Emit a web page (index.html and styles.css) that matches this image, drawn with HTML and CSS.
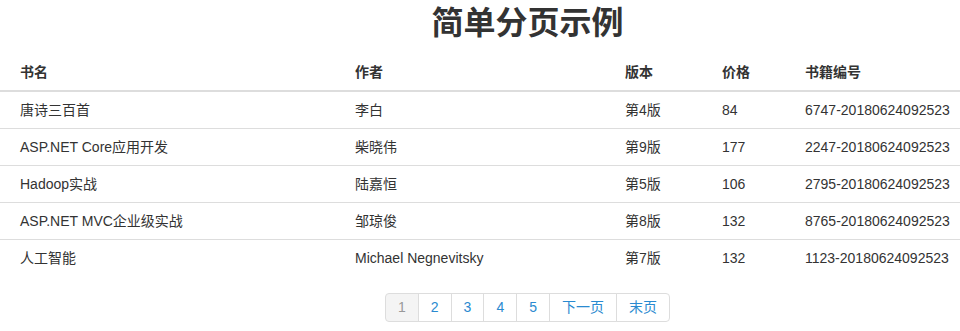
FILE: index.html
```html
<!DOCTYPE html>
<html lang="zh-CN">
<head>
<meta charset="utf-8">
<title>简单分页示例</title>
<link rel="stylesheet" href="styles.css">
</head>
<body>
<div class="center-block">
  <h1 class="title">简单分页示例</h1>
</div>
<table class="book-table">
  <colgroup>
    <col class="c-name">
    <col class="c-author">
    <col class="c-edition">
    <col class="c-price">
    <col class="c-code">
  </colgroup>
  <thead>
    <tr><th>书名</th><th>作者</th><th>版本</th><th>价格</th><th>书籍编号</th></tr>
  </thead>
  <tbody>
    <tr><td>唐诗三百首</td><td>李白</td><td>第4版</td><td>84</td><td>6747-20180624092523</td></tr>
    <tr><td>ASP.NET Core应用开发</td><td>柴晓伟</td><td>第9版</td><td>177</td><td>2247-20180624092523</td></tr>
    <tr><td>Hadoop实战</td><td>陆嘉恒</td><td>第5版</td><td>106</td><td>2795-20180624092523</td></tr>
    <tr><td>ASP.NET MVC企业级实战</td><td>邹琼俊</td><td>第8版</td><td>132</td><td>8765-20180624092523</td></tr>
    <tr><td>人工智能</td><td>Michael Negnevitsky</td><td>第7版</td><td>132</td><td>1123-20180624092523</td></tr>
  </tbody>
</table>
<div class="center-block">
  <ul class="pager">
    <li class="active"><span>1</span></li>
    <li><a href="#">2</a></li>
    <li><a href="#">3</a></li>
    <li><a href="#">4</a></li>
    <li><a href="#">5</a></li>
    <li><a href="#">下一页</a></li>
    <li><a href="#">末页</a></li>
  </ul>
</div>
</body>
</html>
```
FILE: styles.css
```css
html, body {
  margin: 0;
  padding: 0;
  background: #fff;
}
body {
  font-family: "Liberation Sans", "Noto Sans CJK SC", sans-serif;
  font-size: 14px;
  line-height: 20px;
  color: #333;
}
.center-block {
  padding-left: 95px;
  text-align: center;
}
.title {
  margin: 6px 0 13px;
  font-size: 32px;
  line-height: 35px;
  font-weight: bold;
  color: #333;
}
.book-table {
  width: 960px;
  border-collapse: collapse;
  border-spacing: 0;
  table-layout: fixed;
}
.c-name { width: 347px; }
.c-author { width: 270px; }
.c-edition { width: 97px; }
.c-price { width: 83px; }
.c-code { width: 163px; }
.book-table th,
.book-table td {
  padding: 8px;
  text-align: left;
  vertical-align: top;
  white-space: nowrap;
}
.book-table th {
  font-weight: bold;
  border-bottom: 2px solid #ddd;
}
.book-table td {
  border-top: 1px solid #ddd;
}
.book-table th:first-child,
.book-table td:first-child {
  padding-left: 20px;
}
.book-table th:last-child,
.book-table td:last-child {
  padding-right: 4px;
}
.pager {
  display: inline-flex;
  margin: 17px 0 0;
  padding: 0;
  list-style: none;
}
.pager li a,
.pager li span {
  display: block;
  padding: 4px 12px;
  line-height: 19px;
  border: 1px solid #ddd;
  margin-left: -1px;
  color: #2a8ad0;
  text-decoration: none;
  background: #fff;
}
.pager li:first-child span,
.pager li:first-child a {
  margin-left: 0;
  border-radius: 4px 0 0 4px;
}
.pager li:last-child a {
  border-radius: 0 4px 4px 0;
}
.pager li.active span {
  background: #f4f4f4;
  color: #999;
}
```
